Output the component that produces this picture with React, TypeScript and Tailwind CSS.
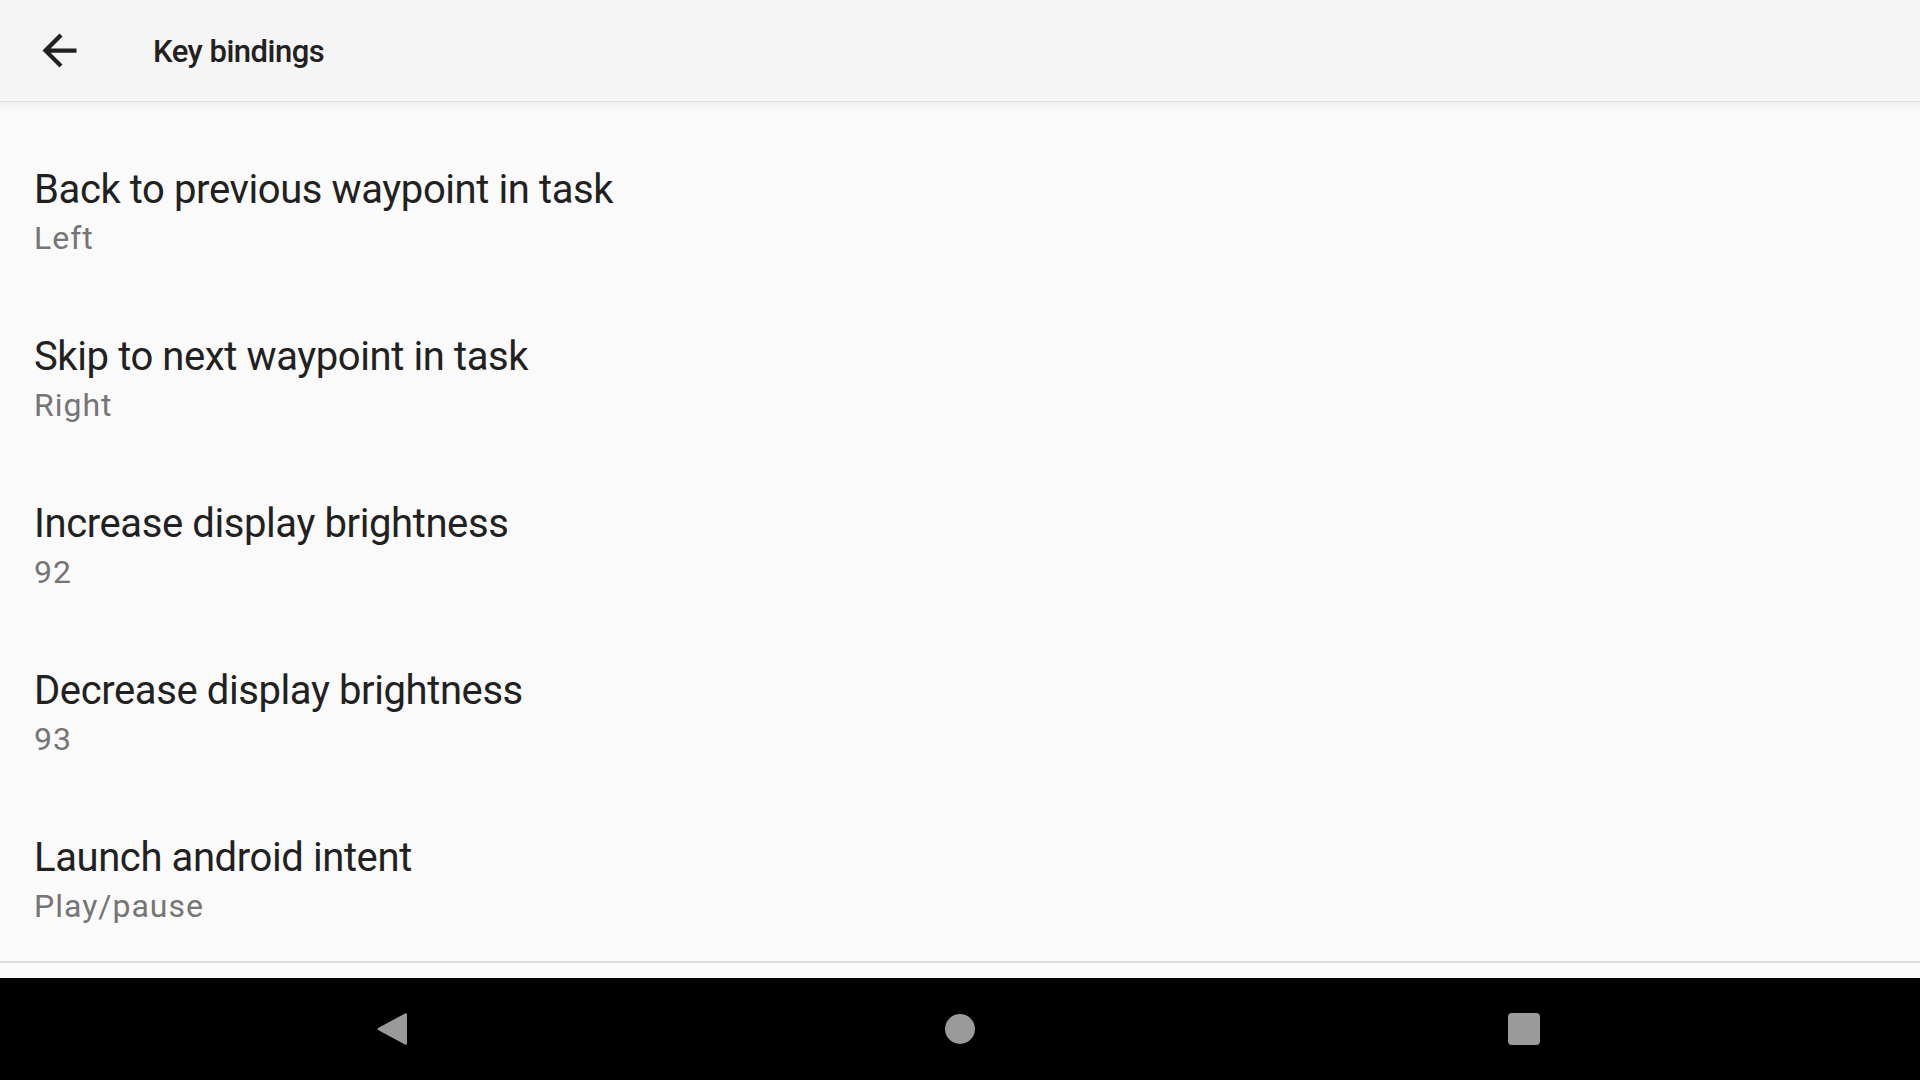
import React from 'react';

const bindings = [
  { title: 'Back to previous waypoint in task', value: 'Left' },
  { title: 'Skip to next waypoint in task', value: 'Right' },
  { title: 'Increase display brightness', value: '92' },
  { title: 'Decrease display brightness', value: '93' },
  { title: 'Launch android intent', value: 'Play/pause' },
];

export default function App() {
  return (
    <div className="w-[1920px] h-[1080px] flex flex-col bg-[#fafafa] overflow-hidden" style={{ fontFamily: 'Roboto, "Noto Sans", sans-serif' }}>
      {/* toolbar */}
      <header className="h-[102px] shrink-0 flex items-center bg-[#f5f5f5] border-b border-[#dedede] shadow-[0_3px_6px_rgba(0,0,0,0.06)] relative z-10">
        <svg width="51" height="51" viewBox="0 0 24 24" className="ml-[34px]" fill="#212121">
          <path d="M20 11H7.83l5.59-5.59L12 4l-8 8 8 8 1.41-1.41L7.83 13H20v-2z" />
        </svg>
        <span className="ml-[68px] mt-[4px] text-[31px] font-medium text-[#212121] tracking-[-0.5px]">Key bindings</span>
      </header>

      {/* list */}
      <main className="flex-1 flex flex-col">
        <div className="pt-[24px] border-b-2 border-[#dcdcdc]">
          {bindings.map(b => (
            <BindingRow key={b.title} title={b.title} value={b.value} />
          ))}
        </div>
      </main>

      {/* android nav bar */}
      <nav className="h-[102px] shrink-0 bg-black flex items-center justify-center pr-[4px]">
        <svg width="32" height="36" viewBox="0 0 32 36">
          <path d="M29 2.5 Q31 1.5 31 4 L31 32 Q31 34.5 29 33.5 L2.5 19.2 Q0.8 18 2.5 16.8 Z" fill="#9a9a9a" />
        </svg>
        <div className="ml-[537px] w-[30px] h-[30px] rounded-full bg-[#9a9a9a]" />
        <div className="ml-[533px] w-[32px] h-[32px] rounded-[4px] bg-[#9a9a9a]" />
      </nav>
    </div>
  );
}

const BindingRow = ({ title, value }: { title: string; value: string }) => (
  <div className="h-[167px] flex flex-col justify-center px-[34px]">
    <div className="text-[40px] leading-[56px] text-[#212121] tracking-[-0.4px]">{title}</div>
    <div className="text-[32px] leading-[40px] text-[#757575] tracking-[1px]">{value}</div>
  </div>
);
